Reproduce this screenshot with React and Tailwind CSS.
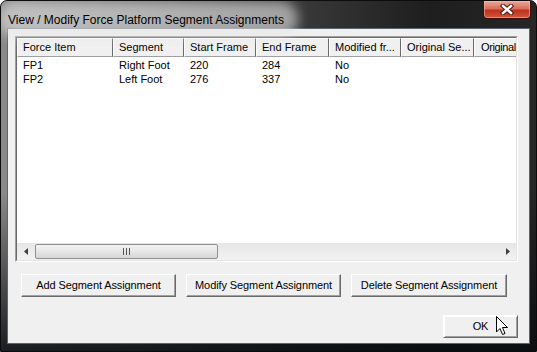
import React from "react";

const columns = [
    { label: "Force Item", w: "w-[96px]" },
    { label: "Segment", w: "w-[71px]" },
    { label: "Start Frame", w: "w-[72px]" },
    { label: "End Frame", w: "w-[73px]" },
    { label: "Modified fr...", w: "w-[72px]" },
    { label: "Original Se...", w: "w-[73px]" },
    { label: "Original", w: "w-[60px]" },
];

const rows = [
    ["FP1", "Right Foot", "220", "284", "No", "", ""],
    ["FP2", "Left Foot", "276", "337", "No", "", ""],
];

const Button = ({ children, className = "" }) => (
    <button
        className={`h-[23px] bg-[#f0f0f0] border border-t-white border-l-white border-b-[#696969] border-r-[#696969] shadow-[inset_-1px_-1px_0_#a0a0a0] text-[11px] tracking-[-0.1px] text-black ${className}`}
    >
        {children}
    </button>
);

const App = () => {
    return (
        <div className="w-[537px] h-[352px] relative flex flex-col rounded-t-[7px] border border-[#0c0c0c] overflow-hidden font-['Liberation_Sans',Arial,sans-serif] bg-[linear-gradient(to_bottom,transparent_55%,rgba(8,10,14,0.85)),linear-gradient(to_right,#8a8a8a,#6a6a6a_25%,#3a3a3a_55%,#1e1e1e_80%,#262626)]">
            {/* title bar */}
            <div className="h-[27px] flex items-start justify-between pl-[7px] pr-[5px]">
                <div className="relative mt-[6px]">
                    <div className="absolute inset-[-6px_-14px_-6px_-10px] rounded-full bg-[#e6e6e6]/60 blur-[6px]" />
                    <span className="relative text-[12px] text-black whitespace-nowrap">
                        View / Modify Force Platform Segment Assignments
                    </span>
                </div>
                <div className="w-[48px] h-[19px] -mt-px rounded-b-[4px] border border-[#3b0e08] bg-[linear-gradient(to_bottom,#e9a99a,#d8705c_45%,#c0321e_55%,#d2553c)] shadow-[inset_0_0_0_1px_rgba(255,200,190,0.5)] flex items-center justify-center">
                    <svg width="14" height="11" viewBox="0 0 14 11">
                        <path d="M3 2 L11 9 M11 2 L3 9" stroke="#4a1a14" strokeWidth="4.5" strokeLinecap="square" />
                        <path d="M3 2 L11 9 M11 2 L3 9" stroke="#ffffff" strokeWidth="2.5" strokeLinecap="square" />
                    </svg>
                </div>
            </div>

            {/* client */}
            <div className="flex-1 flex px-[6px] pb-[7px]">
                <div className="flex-1 flex flex-col bg-[#f0f0f0] border border-[#5c6470] pt-[7px] pl-[7px]">
                    {/* list view */}
                    <div className="w-[503px] h-[226px] border border-t-[#a0a0a0] border-l-[#a0a0a0] border-b-white border-r-white">
                        <div className="w-full h-full flex flex-col bg-white border border-t-[#696969] border-l-[#696969] border-b-[#e3e3e3] border-r-[#e3e3e3] overflow-hidden">
                            <div className="flex h-[19px] shrink-0 bg-[#f0f0f0] text-[11px] text-black">
                                {columns.map((c, i) => (
                                    <div
                                        key={c.label}
                                        className={`${c.w} shrink-0 h-full flex items-center ${i === 6 ? "pl-[6px] tracking-[-0.4px]" : "pl-[5px]"} whitespace-nowrap overflow-hidden border-t border-l border-t-white border-l-white border-b border-r border-b-[#a0a0a0] border-r-[#696969]`}
                                    >
                                        {c.label}
                                    </div>
                                ))}
                            </div>
                            <div className="flex-1 pt-px">
                                {rows.map((r) => (
                                    <div key={r[0]} className="flex h-[14px] text-[11px] text-black leading-[14px]">
                                        {r.map((cell, i) => (
                                            <div key={i} className={`${columns[i].w} shrink-0 pl-[6px] whitespace-nowrap`}>
                                                {cell}
                                            </div>
                                        ))}
                                    </div>
                                ))}
                            </div>
                            {/* horizontal scrollbar */}
                            <div className="h-[17px] shrink-0 flex items-center bg-[linear-gradient(to_bottom,#e6e6e6,#f2f2f2)]">
                                <div className="w-[18px] h-full flex items-center justify-center">
                                    <svg width="4" height="7" viewBox="0 0 4 7">
                                        <path d="M4 0 L0 3.5 L4 7 Z" fill="#404040" />
                                    </svg>
                                </div>
                                <div className="w-[183px] h-[15px] rounded-[2px] border border-[#8e8f8f] bg-[linear-gradient(to_bottom,#f4f4f4,#e6e6e6_50%,#d6d6d6)] flex items-center justify-center gap-[2px]">
                                    <span className="w-px h-[7px] bg-[#555]" />
                                    <span className="w-px h-[7px] bg-[#555]" />
                                    <span className="w-px h-[7px] bg-[#555]" />
                                </div>
                                <div className="flex-1" />
                                <div className="w-[17px] h-full flex items-center justify-center">
                                    <svg width="4" height="7" viewBox="0 0 4 7">
                                        <path d="M0 0 L4 3.5 L0 7 Z" fill="#404040" />
                                    </svg>
                                </div>
                            </div>
                        </div>
                    </div>

                    {/* action buttons */}
                    <div className="flex gap-[10px] mt-[12px] pl-[6px]">
                        <Button className="w-[155px]">Add Segment Assignment</Button>
                        <Button className="w-[155px]">Modify Segment Assignment</Button>
                        <Button className="w-[156px]">Delete Segment Assignment</Button>
                    </div>

                    <div className="flex justify-end mt-[16px] pr-[11px]">
                        <div className="relative">
                            <Button className="w-[75px] border-[#3c3c3c] shadow-[inset_1px_1px_0_#fff,inset_-1px_-1px_0_#a0a0a0]">
                                OK
                            </Button>
                            <svg
                                className="absolute left-[53px] top-[3px]"
                                width="13"
                                height="20"
                                viewBox="0 0 13 20"
                            >
                                <path
                                    d="M0.5 0.5 L0.5 16 L4 12.5 L6.5 18.5 L9 17.5 L6.5 11.5 L11.5 11.5 Z"
                                    fill="#fff"
                                    stroke="#000"
                                    strokeWidth="1"
                                    strokeLinejoin="miter"
                                />
                            </svg>
                        </div>
                    </div>
                </div>
            </div>
        </div>
    );
};

export default App;
